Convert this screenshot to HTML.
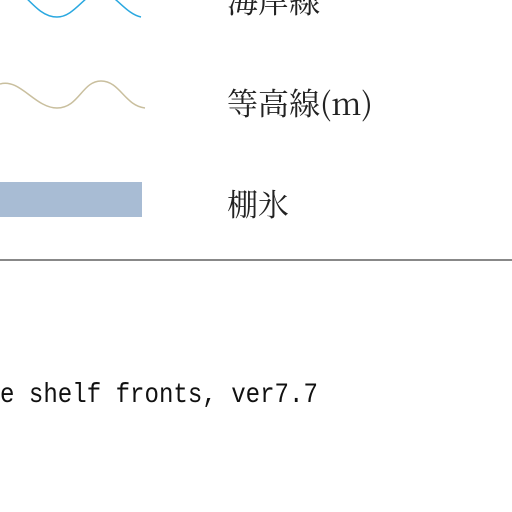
<!DOCTYPE html>
<html><head><meta charset="utf-8"><style>
html,body{margin:0;padding:0;background:#fff;width:512px;height:512px;overflow:hidden;position:relative}
.l{position:absolute;left:227px;font-family:"Noto Serif CJK JP","Noto Serif CJK SC",serif;font-size:31px;color:#222;line-height:1;white-space:nowrap}
.b{position:absolute;left:0;top:382px;font-family:"Liberation Mono",monospace;font-size:28px;color:#111;white-space:pre;line-height:1;transform:scaleX(0.86);transform-origin:0 0}
</style></head><body>
<svg width="512" height="512" style="position:absolute;left:0;top:0">
<path d="M10,-18 C30,0 40,17 57,17 C74,17 84,-5 100,-10 C116,-5 126,14 141,17" fill="none" stroke="#2aa8e0" stroke-width="1.5"/>
<path d="M0,84 C20,78 35,108 57,108 C79,108 82,81 101,81 C120,81 125,106 145,108" fill="none" stroke="#c9bf9e" stroke-width="1.5"/>
<rect x="0" y="182" width="142" height="35" fill="#a8bcd4"/>
<rect x="0" y="259" width="512" height="2" fill="#888"/>
</svg>
<div class="l" style="top:-16px">海岸線</div>
<div class="l" style="top:86px">等高線(m)</div>
<div class="l" style="top:187px">棚氷</div>
<div class="b">e shelf fronts, ver7.7</div>
</body></html>
